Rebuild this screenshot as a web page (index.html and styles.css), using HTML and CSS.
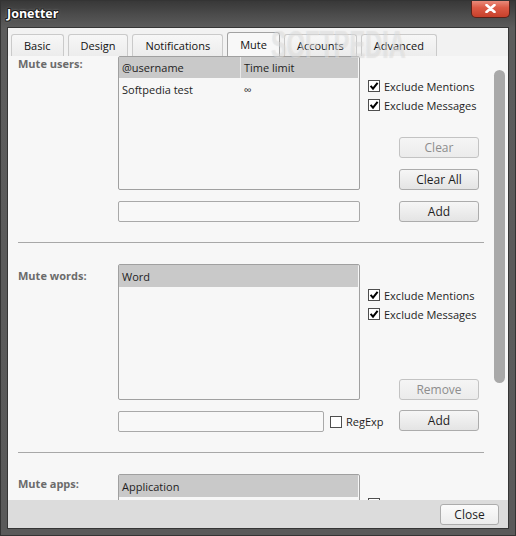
FILE: index.html
```html
<!DOCTYPE html>
<html>
<head>
<meta charset="utf-8">
<link rel="stylesheet" href="styles.css">
</head>
<body>
<div class="window">
  <div class="titlebar">
    <span class="title">Jonetter</span>
    <span class="close-x">
      <svg width="11" height="9" viewBox="0 0 11 9"><path d="M1.5 1 L9.5 8 M9.5 1 L1.5 8" stroke="#fff" stroke-width="2.6" stroke-linecap="round"/></svg>
    </span>
  </div>
  <div class="client">
    <div class="tabs">
      <div class="tab">Basic</div>
      <div class="tab">Design</div>
      <div class="tab">Notifications</div>
      <div class="tab active">Mute</div>
      <div class="tab">Accounts</div>
      <div class="tab">Advanced</div>
    </div>
    <div class="panel">
      <div class="content">
        <section class="section users">
          <div class="label">Mute users:</div>
          <div class="middle">
            <div class="listbox">
              <div class="lb-head"><span class="col c1">@username</span><span class="col c2">Time limit</span></div>
              <div class="lb-row"><span class="col c1">Softpedia test</span><span class="col c2">∞</span></div>
            </div>
            <div class="input-row"><div class="textbox"></div></div>
          </div>
          <div class="side">
            <div class="check"><span class="box"><svg width="10" height="10" viewBox="0 0 10 10"><path d="M1.6 4.8 L4 7.6 L8.6 1.8" stroke="#000" stroke-width="2" fill="none"/></svg></span>Exclude Mentions</div>
            <div class="check"><span class="box"><svg width="10" height="10" viewBox="0 0 10 10"><path d="M1.6 4.8 L4 7.6 L8.6 1.8" stroke="#000" stroke-width="2" fill="none"/></svg></span>Exclude Messages</div>
            <div class="btns">
              <div class="btn disabled">Clear</div>
              <div class="btn">Clear All</div>
              <div class="btn">Add</div>
            </div>
          </div>
        </section>
        <div class="sep"></div>
        <section class="section words">
          <div class="label">Mute words:</div>
          <div class="middle">
            <div class="listbox">
              <div class="lb-head"><span class="col">Word</span></div>
            </div>
            <div class="input-row">
              <div class="textbox short"></div>
              <div class="check inline"><span class="box"></span>RegExp</div>
            </div>
          </div>
          <div class="side">
            <div class="check"><span class="box"><svg width="10" height="10" viewBox="0 0 10 10"><path d="M1.6 4.8 L4 7.6 L8.6 1.8" stroke="#000" stroke-width="2" fill="none"/></svg></span>Exclude Mentions</div>
            <div class="check"><span class="box"><svg width="10" height="10" viewBox="0 0 10 10"><path d="M1.6 4.8 L4 7.6 L8.6 1.8" stroke="#000" stroke-width="2" fill="none"/></svg></span>Exclude Messages</div>
            <div class="btns">
              <div class="btn disabled">Remove</div>
              <div class="btn">Add</div>
            </div>
          </div>
        </section>
        <div class="sep"></div>
        <section class="section apps">
          <div class="label">Mute apps:</div>
          <div class="middle">
            <div class="listbox">
              <div class="lb-head"><span class="col">Application</span></div>
            </div>
          </div>
          <div class="side">
            <div class="check"><span class="box"></span></div>
          </div>
        </section>
      </div>
      <div class="scrollbar"><div class="thumb"></div></div>
    </div>
    <div class="footer"><div class="btn close-btn">Close</div></div>
  </div>
  <span class="watermark">SOFTPEDIA</span>
</div>
</body>
</html>
```

FILE: styles.css
```css
body {
  margin: 0;
  font-family: "Open Sans", "Noto Sans", sans-serif;
  font-size: 11px;
  line-height: 15px;
  color: #1e1e1e;
}

.window {
  position: relative;
  width: 516px;
  height: 536px;
  box-sizing: border-box;
  border: 1px solid #343434;
  padding: 0 6px 6px;
  background: linear-gradient(#383838 0, #4c4c4c 14px, #5c5c5c 27px, #5a5a5a 100%);
  overflow: hidden;
}

.titlebar {
  height: 26px;
  display: flex;
  justify-content: space-between;
  align-items: flex-start;
}

.title {
  margin-top: 5px;
  font-weight: 700;
  font-size: 12.5px;
  line-height: 16px;
  color: #fff;
  text-shadow: -1px 0 #1c1c1c, 1px 0 #1c1c1c, 0 -1px #1c1c1c, 0 1px #1c1c1c,
    -1px -1px #2a2a2a, 1px 1px #2a2a2a, 1px -1px #2a2a2a, -1px 1px #2a2a2a,
    0 0 3px rgba(255, 255, 255, 0.7);
}

.close-x {
  width: 39px;
  height: 18px;
  box-sizing: border-box;
  margin: -1px -1px 0 0;
  border: 1px solid #5a2219;
  border-top: none;
  border-radius: 0 0 5px 5px;
  background: linear-gradient(#eb9282, #dc5a45 45%, #c7402b 100%);
  display: flex;
  align-items: center;
  justify-content: center;
}

.client {
  width: 500px;
  height: 500px;
  border: 1px solid #353535;
  background: #f2f2f2;
  display: flex;
  flex-direction: column;
}

.tabs {
  height: 28px;
  box-sizing: border-box;
  display: flex;
  align-items: flex-end;
  gap: 4px;
  padding-left: 3px;
  background: #f2f2f2;
}

.tab {
  height: 22px;
  box-sizing: border-box;
  padding: 0 12px;
  border: 1px solid #cacaca;
  border-bottom: none;
  border-radius: 3px 3px 0 0;
  background: linear-gradient(#f7f7f7, #ececec);
  display: flex;
  align-items: center;
  color: #111;
}

.tab.active {
  height: 24px;
  background: #f8f8f8;
  border-color: #a2a2a2;
}

.panel {
  height: 444px;
  display: flex;
  background: #f7f7f7;
  overflow: hidden;
}

.content {
  width: 466px;
  flex: none;
  padding-left: 10px;
  margin-right: 10px;
}

.scrollbar {
  width: 11px;
  flex: none;
  padding-top: 14px;
}

.thumb {
  height: 313px;
  border-radius: 6px;
  background: #a9a9a9;
}

.section {
  display: flex;
}

.label {
  width: 100px;
  flex: none;
  font-weight: 700;
  color: #6b6b6b;
}

.words .label { padding-top: 4px; }
.apps .label { padding-top: 2px; }

.middle {
  width: 242px;
  flex: none;
}

.side {
  width: 116px;
  flex: none;
  margin-left: 8px;
  padding-top: 24px;
  display: flex;
  flex-direction: column;
}

.words .side { padding-top: 25px; }

.listbox {
  box-sizing: border-box;
  border: 1px solid #a0a0a0;
  border-radius: 2px;
  background: #f7f7f7;
  padding-right: 1px;
}

.users .listbox { height: 134px; }
.words .listbox { height: 136px; }
.apps .listbox { height: 60px; }

.lb-head {
  height: 21px;
  display: flex;
  align-items: center;
  background: #c9c9c9;
}

.words .lb-head,
.apps .lb-head { height: 22px; }

.col {
  padding-left: 3px;
  box-sizing: border-box;
}

.c1 { width: 122px; }

.lb-head .c1 {
  align-self: stretch;
  display: flex;
  align-items: center;
  border-right: 1px solid #e8e8e8;
}

.lb-row {
  display: flex;
  padding-top: 4px;
}

.input-row {
  display: flex;
  align-items: center;
  margin-top: 11px;
}

.textbox {
  width: 242px;
  height: 21px;
  flex: none;
  box-sizing: border-box;
  border: 1px solid #a9a9a9;
  border-radius: 2px;
  background: #f8f8f8;
}

.textbox.short { width: 206px; }

.check {
  display: flex;
  align-items: center;
  gap: 4px;
  height: 12px;
  margin-bottom: 7px;
  white-space: nowrap;
  flex: none;
}

.check.inline {
  margin: 0 0 0 6px;
}

.box {
  width: 12px;
  height: 12px;
  flex: none;
  box-sizing: border-box;
  border: 1px solid #4e4e4e;
  background: #fff;
  display: flex;
}

.btns {
  display: flex;
  flex-direction: column;
  gap: 11px;
  margin-left: 31px;
  margin-top: 19px;
}

.words .btns {
  margin-top: 52px;
  gap: 10px;
}

.btn {
  width: 80px;
  height: 21px;
  box-sizing: border-box;
  border: 1px solid #acacac;
  border-radius: 3px;
  background: linear-gradient(#f6f6f6, #e4e4e4);
  font-size: 12px;
  line-height: 15px;
  display: flex;
  align-items: center;
  justify-content: center;
  color: #1e1e1e;
}

.btn.disabled {
  color: #8d8d8d;
  border-color: #c3c3c3;
  background: linear-gradient(#f5f5f5, #ebebeb);
}

.sep {
  height: 1px;
  background: #a8a8a8;
  margin: 20px 0 21px;
}

.footer {
  height: 28px;
  box-sizing: border-box;
  display: flex;
  justify-content: flex-end;
  align-items: flex-start;
  padding: 4px 9px 0 0;
  background: #dcdcdc;
}

.btn.close-btn {
  width: 59px;
  background: linear-gradient(#fbfbfb, #ececec);
}

.watermark {
  position: absolute;
  left: 270px;
  top: 30px;
  font-family: "Liberation Sans", sans-serif;
  font-weight: 700;
  font-size: 38px;
  line-height: 28px;
  transform: scaleX(0.62);
  transform-origin: left top;
  color: rgba(255, 255, 255, 0.4);
  text-shadow: 0 0 1px rgba(110, 110, 110, 0.22);
  pointer-events: none;
}
```
